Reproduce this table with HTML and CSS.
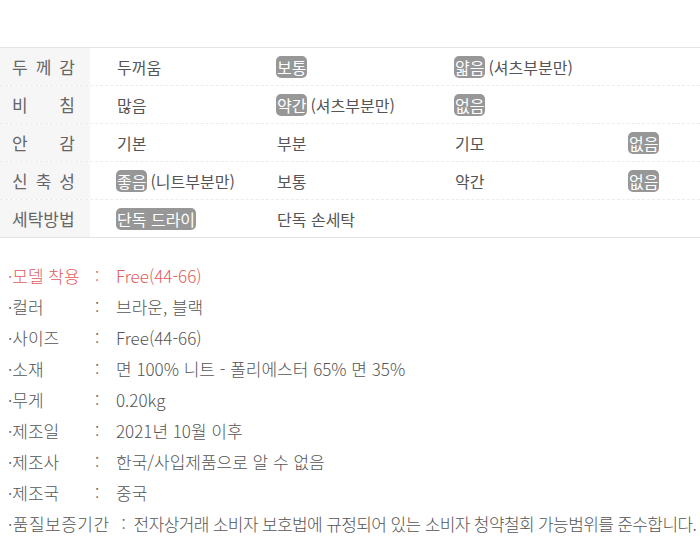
FILE: index.html
```html
<!DOCTYPE html>
<html lang="ko">
<head>
<meta charset="utf-8">
<link rel="stylesheet" href="styles.css">
</head>
<body>
<div class="page">
  <div class="spec">
    <div class="row">
      <div class="label"><span>두 께 감</span></div>
      <div class="cell"><span>두꺼움</span></div>
      <div class="cell"><span class="badge">보통</span></div>
      <div class="cell wide"><span class="badge">얇음</span> (셔츠부분만)</div>
    </div>
    <div class="row">
      <div class="label"><span>비 침</span></div>
      <div class="cell"><span>많음</span></div>
      <div class="cell"><span class="badge">약간</span> (셔츠부분만)</div>
      <div class="cell"><span class="badge">없음</span></div>
      <div class="cell"></div>
    </div>
    <div class="row">
      <div class="label"><span>안 감</span></div>
      <div class="cell"><span>기본</span></div>
      <div class="cell"><span>부분</span></div>
      <div class="cell"><span>기모</span></div>
      <div class="cell"><span class="badge">없음</span></div>
    </div>
    <div class="row">
      <div class="label"><span>신 축 성</span></div>
      <div class="cell"><span class="badge">좋음</span> (니트부분만)</div>
      <div class="cell"><span>보통</span></div>
      <div class="cell"><span>약간</span></div>
      <div class="cell"><span class="badge">없음</span></div>
    </div>
    <div class="row">
      <div class="label"><span>세탁방법</span></div>
      <div class="cell"><span class="badge">단독 드라이</span></div>
      <div class="cell"><span>단독 손세탁</span></div>
      <div class="cell"></div>
      <div class="cell"></div>
    </div>
  </div>

  <ul class="info">
    <li class="red"><span class="key">·모델 착용</span><span class="colon">:</span><span class="val">Free(44-66)</span></li>
    <li><span class="key">·컬러</span><span class="colon">:</span><span class="val">브라운, 블랙</span></li>
    <li><span class="key">·사이즈</span><span class="colon">:</span><span class="val">Free(44-66)</span></li>
    <li><span class="key">·소재</span><span class="colon">:</span><span class="val">면 100% 니트 - 폴리에스터 65% 면 35%</span></li>
    <li><span class="key">·무게</span><span class="colon">:</span><span class="val">0.20kg</span></li>
    <li><span class="key">·제조일</span><span class="colon">:</span><span class="val">2021년 10월 이후</span></li>
    <li><span class="key">·제조사</span><span class="colon">:</span><span class="val">한국/사입제품으로 알 수 없음</span></li>
    <li><span class="key">·제조국</span><span class="colon">:</span><span class="val">중국</span></li>
    <li class="long"><span class="key">·품질보증기간</span><span class="colon">:</span><span class="val">전자상거래 소비자 보호법에 규정되어 있는 소비자 청약철회 가능범위를 준수합니다.</span></li>
  </ul>
</div>
</body>
</html>
```
FILE: styles.css
```css
html, body {
  margin: 0;
  padding: 0;
  background: #ffffff;
}
body {
  font-family: "Noto Sans CJK KR", "Noto Sans", sans-serif;
  color: #555555;
}
.page {
  width: 700px;
  padding-top: 47px;
}
.spec {
  border-top: 1px solid #e3e3e3;
  border-bottom: 1px solid #e3e3e3;
}
.row {
  display: grid;
  grid-template-columns: 90px 160px 178px 174px 1fr;
  height: 37px;
  border-top: 1px dashed #ececec;
}
.row:first-child {
  border-top: none;
}
.label {
  background: #f6f6f6;
  display: flex;
  align-items: center;
  padding-left: 12px;
  font-size: 17px;
  color: #666666;
}
.label span {
  display: block;
  width: 63px;
  text-align: justify;
  text-align-last: justify;
}
.cell {
  display: flex;
  align-items: center;
  padding-left: 27px;
  font-size: 16px;
  color: #555555;
  white-space: nowrap;
  gap: 3px;
}
.cell.wide {
  grid-column: span 2;
}
.badge {
  background: #979797;
  color: #ffffff;
  border-radius: 5px;
  padding: 0 1px;
  line-height: 22px;
  margin-left: -1px;
}
.info {
  list-style: none;
  margin: 0;
  padding: 22px 0 0 8px;
  font-size: 17px;
  font-weight: 300;
  color: #555555;
}
.info li {
  display: flex;
  height: 31px;
  align-items: center;
  white-space: nowrap;
}
.info .key {
  width: 87px;
}
.info .colon {
  width: 21px;
}
.info .red {
  color: #e05c5c;
}
.info .long .key {
  width: auto;
  letter-spacing: 0.5px;
  margin-right: 12px;
}
.info .long .colon {
  width: 12px;
}
.info .long .val {
  letter-spacing: -0.62px;
}
```
